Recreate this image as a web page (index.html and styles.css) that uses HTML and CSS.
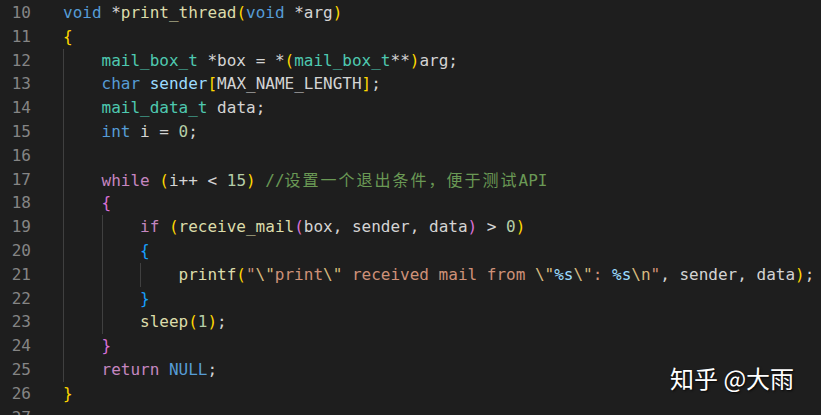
FILE: index.html
```html
<!DOCTYPE html>
<html>
<head>
<meta charset="utf-8">
<link rel="stylesheet" href="styles.css">
</head>
<body>
<div class="editor">
  <div class="line"><span class="ln">10</span><span class="code"><span class="kw">void</span> *<span class="fn">print_thread</span><span class="b1">(</span><span class="kw">void</span> *<span class="v">arg</span><span class="b1">)</span></span></div>
  <div class="line"><span class="ln">11</span><span class="code"><span class="b1">{</span></span></div>
  <div class="line"><span class="ln">12</span><span class="code"><span class="ind"></span><span class="ty">mail_box_t</span> *<span class="v">box</span> = *<span class="b1">(</span><span class="ty">mail_box_t</span>**<span class="b1">)</span><span class="v">arg</span>;</span></div>
  <div class="line"><span class="ln">13</span><span class="code"><span class="ind"></span><span class="kw">char</span> <span class="vd">sender</span><span class="b1">[</span>MAX_NAME_LENGTH<span class="b1">]</span>;</span></div>
  <div class="line"><span class="ln">14</span><span class="code"><span class="ind"></span><span class="ty">mail_data_t</span> <span class="v">data</span>;</span></div>
  <div class="line"><span class="ln">15</span><span class="code"><span class="ind"></span><span class="kw">int</span> <span class="v">i</span> = <span class="num">0</span>;</span></div>
  <div class="line"><span class="ln">16</span><span class="code"><span class="ind"></span></span></div>
  <div class="line"><span class="ln">17</span><span class="code"><span class="ind"></span><span class="ctl">while</span> <span class="b1">(</span><span class="v">i</span>++ &lt; <span class="num">15</span><span class="b1">)</span> <span class="cm">//<span class="cjk">设置一个退出条件，便于测试</span>API</span></span></div>
  <div class="line"><span class="ln">18</span><span class="code"><span class="ind"></span><span class="b2">{</span></span></div>
  <div class="line"><span class="ln">19</span><span class="code"><span class="ind"></span><span class="ind"></span><span class="ctl">if</span> <span class="b1">(</span><span class="fn">receive_mail</span><span class="b2">(</span><span class="v">box</span>, <span class="v">sender</span>, <span class="v">data</span><span class="b2">)</span> &gt; <span class="num">0</span><span class="b1">)</span></span></div>
  <div class="line"><span class="ln">20</span><span class="code"><span class="ind"></span><span class="ind"></span><span class="b3">{</span></span></div>
  <div class="line"><span class="ln">21</span><span class="code"><span class="ind"></span><span class="ind"></span><span class="ind"></span><span class="fn">printf</span><span class="b1">(</span><span class="str">"</span><span class="esc">\"</span><span class="str">print</span><span class="esc">\"</span><span class="str"> received mail from </span><span class="esc">\"</span><span class="ph">%s</span><span class="esc">\"</span><span class="str">: </span><span class="ph">%s</span><span class="esc">\n</span><span class="str">"</span>, <span class="v">sender</span>, <span class="v">data</span><span class="b1">)</span>;</span></div>
  <div class="line"><span class="ln">22</span><span class="code"><span class="ind"></span><span class="ind"></span><span class="b3">}</span></span></div>
  <div class="line"><span class="ln">23</span><span class="code"><span class="ind"></span><span class="ind"></span><span class="fn">sleep</span><span class="b1">(</span><span class="num">1</span><span class="b1">)</span>;</span></div>
  <div class="line"><span class="ln">24</span><span class="code"><span class="ind"></span><span class="b2">}</span></span></div>
  <div class="line"><span class="ln">25</span><span class="code"><span class="ind"></span><span class="ctl">return</span> <span class="kw">NULL</span>;</span></div>
  <div class="line"><span class="ln">26</span><span class="code"><span class="b1">}</span></span></div>
  <div class="line"><span class="ln">27</span><span class="code"></span></div>
</div>
<div class="watermark">知乎 @大雨</div>
</body>
</html>
```
FILE: styles.css
```css
html, body {
  margin: 0;
  padding: 0;
  background: #1e1e1e;
  overflow: hidden;
}
body {
  position: relative;
  width: 821px;
  height: 415px;
}
.editor {
  padding-top: 1px;
  font-family: "DejaVu Sans Mono", "Liberation Mono", monospace;
  font-size: 16px;
  color: #d4d4d4;
}
.line {
  display: flex;
  height: 23.8px;
  line-height: 23.8px;
  white-space: pre;
}
.ln {
  width: 31px;
  text-align: right;
  color: #858585;
  margin-right: 32px;
  flex: none;
}
.code {
  display: block;
  white-space: pre;
}
.ind {
  display: inline-block;
  vertical-align: top;
  width: 38.5px;
  height: 23.8px;
  box-shadow: inset 1px 0 0 #404040;
}
.kw { color: #569cd6; }
.ctl { color: #c586c0; }
.fn { color: #dcdcaa; }
.ty { color: #4ec9b0; }
.v { color: #d4d4d4; }
.vd { color: #9cdcfe; }
.num { color: #b5cea8; }
.str { color: #ce9178; }
.esc { color: #d7ba7d; }
.ph { color: #9cdcfe; }
.cm { color: #6a9955; }
.cjk {
  font-family: "Noto Sans CJK SC", sans-serif;
  font-size: 16px;
  letter-spacing: 2px;
}
.b1 { color: #ffd700; }
.b2 { color: #da70d6; }
.b3 { color: #179fff; }
.watermark {
  position: absolute;
  left: 670px;
  top: 362px;
  font-family: "Noto Sans CJK SC", sans-serif;
  font-size: 24px;
  line-height: 32px;
  color: #ffffff;
  text-shadow: 1px 1px 2px rgba(0,0,0,0.8);
  white-space: nowrap;
}
```
